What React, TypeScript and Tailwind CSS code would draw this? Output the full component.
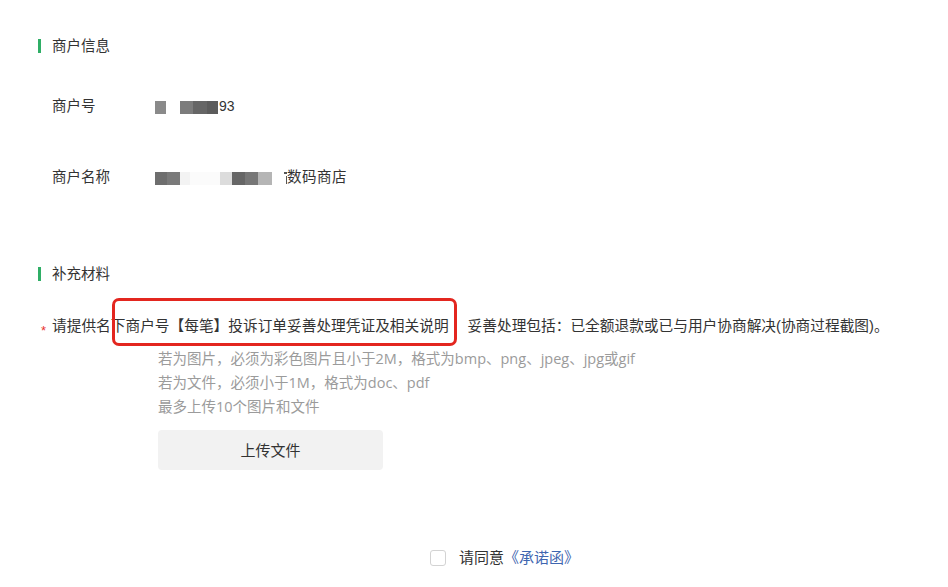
import React from 'react'

const font = { fontFamily: '"Liberation Sans", "Noto Sans CJK SC", "Noto Sans", sans-serif' }
const hintFont = { fontFamily: '"Open Sans", "Noto Sans CJK SC", sans-serif' }

function SectionTitle({ text }: { text: string }) {
  return (
    <div className="flex h-[20px] items-center pl-[38px]">
      <span className="h-[14px] w-[3px] bg-[#2fae66]" />
      <span className="ml-[11px] text-[14.5px] leading-[20px] text-[#333]">{text}</span>
    </div>
  )
}

function Mosaic({ blocks }: { blocks: [number, string][] }) {
  return (
    <span className="inline-flex h-[13px]">
      {blocks.map(([w, c], i) => (
        <span key={i} className="h-full" style={{ width: w, background: c }} />
      ))}
    </span>
  )
}

export default function App() {
  return (
    <div className="min-h-screen w-full bg-white pt-[36px] text-[#333]" style={font}>
      <SectionTitle text="商户信息" />

      <div className="mt-[40px] flex h-[20px] items-center pl-[52px] text-[14.5px] leading-[20px]">
        <span className="w-[103px]">商户号</span>
        <span className="flex items-end">
          <Mosaic blocks={[[11, '#8a8a8a'], [14, '#fff'], [13, '#7c7c7c'], [14, '#666'], [11, '#5c5c5c']]} />
          <span className="ml-[1px] text-[14px] leading-[16px]">93</span>
        </span>
      </div>

      <div className="mt-[51px] flex h-[20px] items-center pl-[52px] text-[14.5px] leading-[20px]">
        <span className="w-[103px]">商户名称</span>
        <span className="flex items-center">
          <span className="mt-[6px]">
            <Mosaic
              blocks={[
                [12, '#6e6e6e'],
                [13, '#7a7a7a'],
                [10, '#f3f3f3'],
                [30, '#fbfbfb'],
                [12, '#dcdcdc'],
                [13, '#666'],
                [13, '#777'],
                [14, '#b5b5b5'],
              ]}
            />
          </span>
          <span className="ml-[12px] mt-[2px] flex h-[12px] w-[3px] flex-col justify-between">
            <span className="h-[2px] w-[3px] bg-[#555]" />
            <span className="h-[8px] w-[1.5px] self-end bg-[#555]" />
          </span>
          <span className="tracking-[0.5px]">数码商店</span>
        </span>
      </div>

      <div className="mt-[77px]">
        <SectionTitle text="补充材料" />
      </div>

      <div className="relative mt-[32px] flex h-[20px] items-center pl-[41px] text-[14.7px] leading-[20px]">
        <span className="mt-[8px] w-[11px] text-[13px] leading-[13px] text-[#e8322d]">*</span>
        <span>请提供名下商户号【每笔】投诉订单妥善处理凭证及相关说明</span>
        <span className="ml-[19px]">妥善处理包括：已全额退款或已与用户协商解决(协商过程截图)。</span>
        <div className="absolute left-[112px] top-[-18px] h-[48px] w-[345px] rounded-[7px] border-[3px] border-[#e3261f]" />
      </div>

      <div className="mt-[11px] pl-[158px] text-[14.5px] leading-[24px] text-[#9b9b9b]" style={hintFont}>
        <div>若为图片，必须为彩色图片且小于2M，格式为bmp、png、jpeg、jpg或gif</div>
        <div>若为文件，必须小于1M，格式为doc、pdf</div>
        <div>最多上传10个图片和文件</div>
        <button className="mt-[11px] flex h-[40px] w-[225px] items-center justify-center rounded-[4px] bg-[#f2f2f2] text-[15px] text-[#333]">
          上传文件
        </button>
      </div>

      <div className="mt-[78px] flex h-[20px] items-center pl-[430px] text-[15px] leading-[20px]">
        <span className="h-[16px] w-[16px] rounded-[3px] border border-[#d3d3d3] bg-white" />
        <span className="ml-[13px]">请同意</span>
        <span className="text-[#3f66b0]">《承诺函》</span>
      </div>
    </div>
  )
}
